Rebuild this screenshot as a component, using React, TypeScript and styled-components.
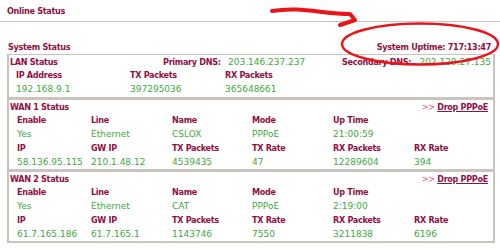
import React from 'react';
import styled, { createGlobalStyle } from 'styled-components';

const GlobalStyle = createGlobalStyle`
  html, body {
    margin: 0;
    padding: 0;
    background: #ffffff;
  }
  body {
    font-family: 'DejaVu Sans', Verdana, sans-serif;
  }
`;

const MAROON = '#90103f';
const GREEN = '#3ea83e';
const GREY = '#c9c4bd';

const wan = [
  {
    title: 'WAN 1 Status',
    top: { Enable: 'Yes', Line: 'Ethernet', Name: 'CSLOX', Mode: 'PPPoE', 'Up Time': '21:00:59' },
    bottom: {
      IP: '58.136.95.115',
      'GW IP': '210.1.48.12',
      'TX Packets': '4539435',
      'TX Rate': '47',
      'RX Packets': '12289604',
      'RX Rate': '394',
    },
  },
  {
    title: 'WAN 2 Status',
    top: { Enable: 'Yes', Line: 'Ethernet', Name: 'CAT', Mode: 'PPPoE', 'Up Time': '2:19:00' },
    bottom: {
      IP: '61.7.165.186',
      'GW IP': '61.7.165.1',
      'TX Packets': '1143746',
      'TX Rate': '7550',
      'RX Packets': '3211838',
      'RX Rate': '6196',
    },
  },
];

const App = () => {
  return (
    <>
      <GlobalStyle />
      <Page>
        <TopBar>
          <Label>Online Status</Label>
        </TopBar>

        <SystemRow>
          <Label>System Status</Label>
          <Label>System Uptime: 717:13:47</Label>
        </SystemRow>

        <Panel>
          <Section>
            <LanHead>
              <Label>LAN Status</Label>
              <Label>Primary DNS:</Label>
              <Value>203.146.237.237</Value>
              <Label>Secondary DNS:</Label>
              <Value>202.129.27.135</Value>
            </LanHead>
            <LanRow>
              <Label>IP Address</Label>
              <Label>TX Packets</Label>
              <Label>RX Packets</Label>
            </LanRow>
            <LanRow>
              <Value>192.168.9.1</Value>
              <Value>397295036</Value>
              <Value>365648661</Value>
            </LanRow>
          </Section>

          {wan.map((w, i) => (
            <Section key={w.title} last={i === wan.length - 1}>
              <SectionHead>
                <Label>{w.title}</Label>
                <Label>
                  <Arrows>&gt;&gt;</Arrows> <u>Drop PPPoE</u>
                </Label>
              </SectionHead>
              <WanRow>
                {Object.keys(w.top).map((k) => (
                  <Label key={k}>{k}</Label>
                ))}
              </WanRow>
              <WanRow>
                {Object.values(w.top).map((v, j) => (
                  <Value key={j}>{v}</Value>
                ))}
              </WanRow>
              <WanRow>
                {Object.keys(w.bottom).map((k) => (
                  <Label key={k}>{k}</Label>
                ))}
              </WanRow>
              <WanRow>
                {Object.values(w.bottom).map((v, j) => (
                  <Value key={j}>{v}</Value>
                ))}
              </WanRow>
            </Section>
          ))}
        </Panel>

        {/* hand-drawn annotation on top of the screenshot */}
        <Scribble viewBox="0 0 500 249" width="500" height="249">
          <path
            d="M272 11 C 290 8, 305 10, 322 12 S 342 14, 350 14 L 355 20 L 340 25"
            fill="none"
            stroke="#e8141a"
            strokeWidth="4"
            strokeLinecap="round"
            strokeLinejoin="round"
          />
          <ellipse cx="420" cy="44" rx="78" ry="20.5" fill="none" stroke="#e8141a" strokeWidth="2.4" />
        </Scribble>
      </Page>
    </>
  );
};

export default App;

const Page = styled.div`
  position: relative;
  width: 500px;
  height: 249px;
  overflow: hidden;
  background: #fff;
`;

const TopBar = styled.div`
  height: 21px;
  display: flex;
  align-items: center;
  padding-left: 7px;
  border-bottom: 1px solid ${GREY};
`;

const SystemRow = styled.div`
  margin-top: 18px;
  height: 14px;
  display: flex;
  align-items: center;
  justify-content: space-between;
  padding: 0 9px 0 8px;
`;

const Panel = styled.div`
  margin: 0 5px 0 7px;
  border: 2px solid ${GREY};
  border-top-width: 1px;
`;

const Section = styled.div<{ last?: boolean }>`
  border-bottom: ${({ last }) => (last ? 'none' : `3px solid ${GREY}`)};
  padding-bottom: 1px;
  &:nth-child(n + 2) {
    padding-bottom: 0;
  }
`;

const Label = styled.span`
  font-family: 'DejaVu Sans Condensed', 'DejaVu Sans', Verdana, sans-serif;
  font-weight: bold;
  font-size: 9px;
  letter-spacing: -0.3px;
  color: ${MAROON};
  white-space: nowrap;
`;

const Value = styled.span`
  font-family: 'DejaVu Sans', Verdana, sans-serif;
  font-size: 9px;
  color: ${GREEN};
  white-space: nowrap;
`;

const LanHead = styled.div`
  height: 13px;
  display: grid;
  grid-template-columns: 153px 65px 114px 1fr auto;
  align-items: center;
  padding: 0 2px 0 1px;
`;

const LanRow = styled.div`
  height: 14px;
  display: grid;
  grid-template-columns: 114px 95px 1fr;
  align-items: center;
  padding-left: 7px;
`;

const SectionHead = styled.div`
  height: 13px;
  display: flex;
  align-items: center;
  justify-content: space-between;
  padding: 0 5px 0 1px;
`;

const Arrows = styled.span`
  color: #f0456e;
  font-weight: normal;
`;

const WanRow = styled.div`
  height: 14px;
  display: grid;
  grid-template-columns: 74px 81px 80px 81px 81px 1fr;
  align-items: center;
  padding-left: 8px;
`;

const Scribble = styled.svg`
  position: absolute;
  left: 0;
  top: 0;
  pointer-events: none;
`;
